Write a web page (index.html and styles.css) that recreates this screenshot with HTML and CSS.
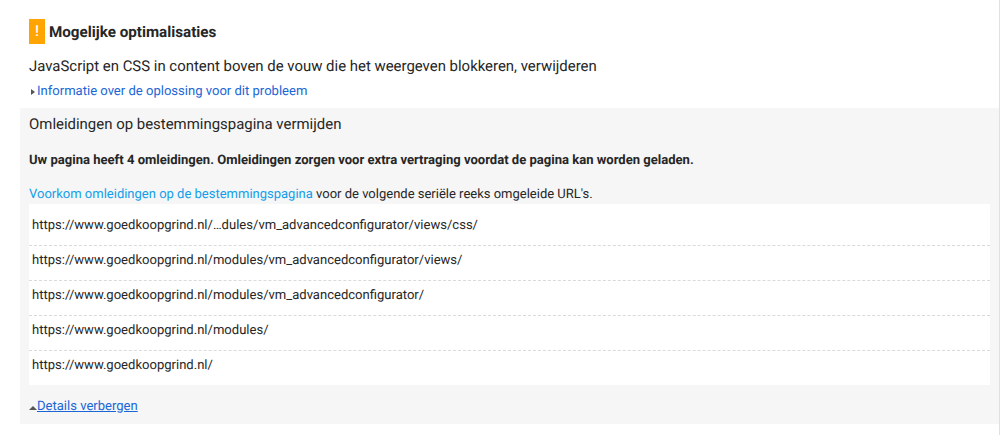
FILE: index.html
```html
<!DOCTYPE html>
<html lang="nl">
<head>
<meta charset="utf-8">
<title>Mogelijke optimalisaties</title>
<link rel="stylesheet" href="styles.css">
</head>
<body>
<main class="page">
  <section class="intro">
    <h2 class="heading"><span class="badge">!</span>Mogelijke optimalisaties</h2>
    <p class="rule-title">JavaScript en CSS in content boven de vouw die het weergeven blokkeren, verwijderen</p>
    <p class="toggle"><span class="arrow-right"></span><a class="link" href="#">Informatie over de oplossing voor dit probleem</a></p>
  </section>
  <section class="panel">
    <h3 class="panel-title">Omleidingen op bestemmingspagina vermijden</h3>
    <p class="summary">Uw pagina heeft 4 omleidingen. Omleidingen zorgen voor extra vertraging voordat de pagina kan worden geladen.</p>
    <p class="advice"><a class="advice-link" href="#">Voorkom omleidingen op de bestemmingspagina</a> voor de volgende seriële reeks omgeleide URL's.</p>
    <ul class="urls">
      <li>https://www.goedkoopgrind.nl/…dules/vm_advancedconfigurator/views/css/</li>
      <li>https://www.goedkoopgrind.nl/modules/vm_advancedconfigurator/views/</li>
      <li>https://www.goedkoopgrind.nl/modules/vm_advancedconfigurator/</li>
      <li>https://www.goedkoopgrind.nl/modules/</li>
      <li>https://www.goedkoopgrind.nl/</li>
    </ul>
    <p class="toggle toggle-details"><span class="arrow-up"></span><a class="link underlined" href="#">Details verbergen</a></p>
  </section>
</main>
</body>
</html>
```
FILE: styles.css
```css
* { box-sizing: border-box; }
html, body { margin: 0; padding: 0; background: #fff; }
body {
  width: 1000px;
  height: 435px;
  overflow: hidden;
  font-family: Roboto, "Liberation Sans", sans-serif;
  color: #262626;
  text-rendering: geometricPrecision;
}
.page { padding: 19px 0 0 20px; border-right: 1px solid #e0e0e0; height: 435px; }
.intro { padding-left: 9px; }
.heading {
  display: flex;
  align-items: center;
  gap: 4px;
  margin: 0;
  height: 25px;
  font-size: 15.2px;
  font-weight: 700;
}
.badge {
  width: 16px;
  height: 25px;
  background: #ffa400;
  color: #fff;
  font-size: 15px;
  font-weight: 500;
  line-height: 25px;
  text-align: center;
}
.rule-title {
  margin: 12px 0 0;
  font-size: 14.93px;
  line-height: 20px;
}
.toggle {
  display: flex;
  align-items: center;
  margin: 7px 0 0;
  font-size: 13.05px;
  line-height: 18px;
}
.link { color: #1a66d6; text-decoration: none; }
.underlined { text-decoration: underline; }
.arrow-right {
  width: 0; height: 0;
  margin: 0 2px 0 2px;
  border-left: 4px solid #555;
  border-top: 3.5px solid transparent;
  border-bottom: 3.5px solid transparent;
}
.arrow-up {
  width: 0; height: 0;
  margin: 2px 0 0 0;
  border-bottom: 4px solid #555;
  border-left: 4px solid transparent;
  border-right: 4px solid transparent;
}
.panel {
  margin-top: 7px;
  height: 316px;
  padding: 6px 9px 0;
  background: #f6f6f6;
}
.panel-title {
  margin: 0;
  font-size: 14.95px;
  font-weight: 400;
  line-height: 20px;
}
.summary {
  margin: 19px 0 0;
  font-size: 13.06px;
  font-weight: 700;
  line-height: 16px;
}
.advice {
  margin: 18px 0 0;
  font-size: 13px;
  line-height: 16px;
}
.advice-link { color: #129eea; text-decoration: none; }
.urls {
  list-style: none;
  margin: 1px 0 0;
  padding: 7px 0 0;
  width: 961px;
  background: #fff;
  font-size: 13.06px;
}
.urls li {
  padding: 5px 3px 9px;
  line-height: 20px;
  border-bottom: 1px dashed #dadada;
}
.urls li:last-child { border-bottom: 0; }
.toggle-details { margin-top: 13px; }
```
